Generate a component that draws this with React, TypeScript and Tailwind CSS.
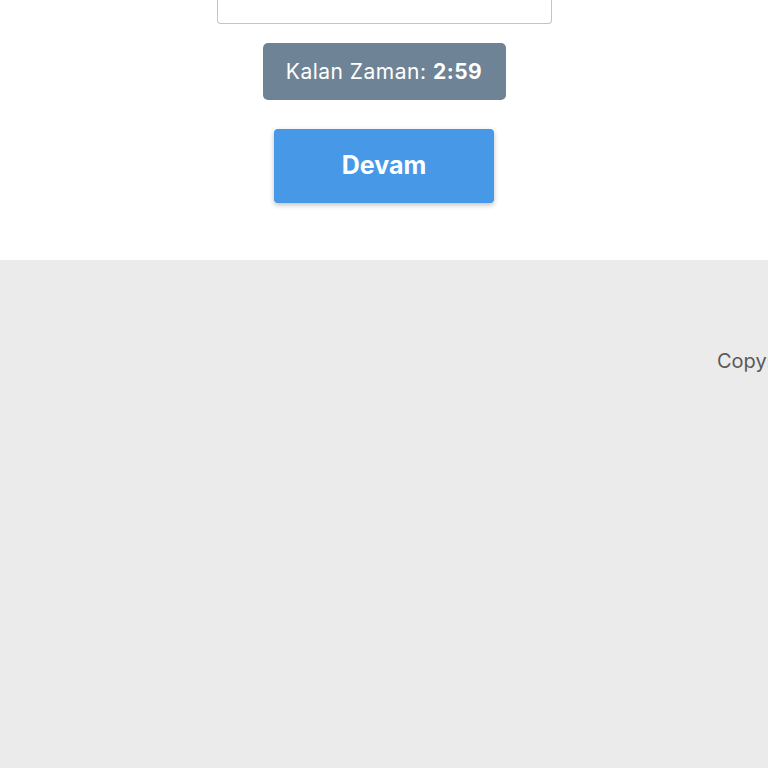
import React from 'react';

export default function App() {
  return (
    <div className="min-h-[768px] w-full overflow-hidden bg-[#ebebeb] font-[family-name:Inter,sans-serif]">
      {/* Form */}
      <div className="flex flex-col items-center bg-white pb-[57px]">
        <div className="h-[24px] w-[335px] rounded-b-[4px] border border-t-0 border-[#c4c4c4] bg-white" />

        <div className="mt-[19px] flex h-[57px] w-[243px] items-center justify-center rounded-[5px] bg-[#6f8396] text-[21px] tracking-[0.5px] text-white">
          <span>
            Kalan Zaman: <span className="font-bold">2:59</span>
          </span>
        </div>

        <button className="mt-[29px] flex h-[74px] w-[220px] items-center justify-center rounded-[4px] bg-[#4799e8] text-[25px] font-bold text-white shadow-[0_2px_5px_rgba(0,0,0,0.25)]">
          Devam
        </button>
      </div>

      {/* Footer */}
      <div className="flex pt-[88px]">
        <p className="ml-[717px] whitespace-nowrap text-[20px] leading-[26px] text-[#5a5a5a]">
          Copyright © 2024
        </p>
      </div>
    </div>
  );
}
